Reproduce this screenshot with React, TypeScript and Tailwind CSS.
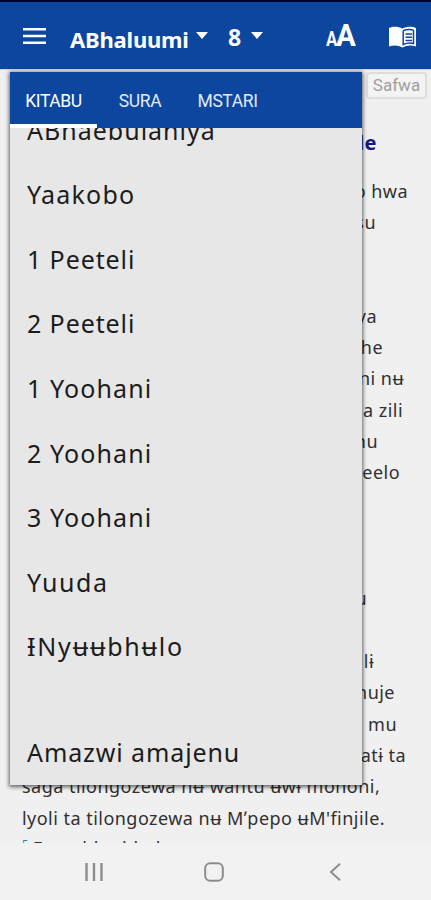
import React from 'react';

interface BookItem {
  name: string;
  className: string;
}

const books: BookItem[] = [
  { name: 'ABhaebulaniya', className: 'tracking-[1px]' },
  { name: 'Yaakobo', className: 'tracking-[1.2px]' },
  { name: '1 Peeteli', className: 'tracking-[0.9px]' },
  { name: '2 Peeteli', className: 'tracking-[0.9px]' },
  { name: '1 Yoohani', className: 'tracking-[1.1px]' },
  { name: '2 Yoohani', className: 'tracking-[1.1px]' },
  { name: '3 Yoohani', className: 'tracking-[1.1px]' },
  { name: 'Yuuda', className: 'tracking-[1.6px]' },
  { name: 'ƗNyʉʉbhʉlo', className: 'tracking-[1.8px]' },
];

// Chapter text; most of each line sits below the open book list
const verses = [
  { text: 'o hwa', className: 'mt-[18px] pr-[23px]' },
  { text: 'su', className: 'pr-[55px]' },
  { text: 'ya', className: 'mt-[62px] pr-[54px]' },
  { text: 'he', className: 'pr-[48px]' },
  { text: 'ni nʉ', className: 'pr-[27px]' },
  { text: 'a zili', className: 'pr-[28px]' },
  { text: 'nu', className: 'pr-[53px]' },
  { text: 'eelo', className: 'pr-[31px]' },
  { text: 'u', className: 'mt-[94px] pr-[64px]' },
  { text: 'lɨ', className: 'mt-[32px] pr-[57px]' },
  { text: 'nuje', className: 'pr-[36px]' },
  { text: 'mu', className: 'pr-[34px]' },
  { text: 'atɨ ta', className: 'pr-[25px]' },
];

const Header: React.FC = () => (
  <header className="flex h-[69px] shrink-0 items-center border-t-2 border-[#000035] bg-[#0d469f] text-white">
    <svg className="ml-[22px] h-[18px] w-6" viewBox="0 0 24 18" fill="none" stroke="currentColor" strokeWidth="2.6">
      <path d="M1 2.3h23M1 9h23M1 15.7h23" />
    </svg>
    <div className="ml-6 flex w-[119px] pt-1.5 text-[22px] leading-none font-bold">
      <span className="tracking-[-0.2px]">ABhaluumi</span>
    </div>
    <svg className="ml-[7px] h-[7px] w-3" viewBox="0 0 12 7" fill="currentColor">
      <path d="M0 0h12L6 7z" />
    </svg>
    <span className="ml-[20px] w-[15px] pt-1 text-[23px] leading-none font-bold">8</span>
    <svg className="ml-2 h-[7px] w-3" viewBox="0 0 12 7" fill="currentColor">
      <path d="M0 0h12L6 7z" />
    </svg>
    <div className="ml-[63px] flex w-[32px] items-baseline font-['Roboto',sans-serif] leading-none font-bold">
      <span className="w-[10px] origin-left scale-x-[0.8] text-[21px]">A</span>
      <span className="origin-left scale-x-[0.95] text-[31px]">A</span>
    </div>
    <svg className="mt-0.5 ml-[30px] h-[22px] w-[29px]" viewBox="0 0 29 22">
      <path fill="currentColor" d="M1 2C5 0 10.500.5 14.500 2.500C18.500.5 24 0 28 2V20.500C23.500 18.800 18.500 19 14.500 21.500C10.500 19 5.500 18.800 1 20.500z" />
      <path fill="none" stroke="#0d469f" strokeWidth="1.500" d="M15 4.800C18.500 3.500 22 3.200 25.500 4.200M15.200 5v13.500C18.500 17 22 16.600 25.500 17.400V4.200M17.500 8h6.500M17.500 11.200h6.500M17.500 14.400h6.500" />
    </svg>
  </header>
);

const BookSelector: React.FC = () => (
  <div className="absolute top-[72px] left-[10px] flex h-[713px] w-[352px] flex-col overflow-hidden bg-[#e7e7e7] shadow-[0_1px_4px_1px_rgba(0,0,0,0.6)]">
    <nav className="z-10 flex h-14 shrink-0 bg-[#0d469f] font-['Roboto',sans-serif] text-[17.5px] text-[#e3eafa]">
      <button className="flex w-[87px] items-center justify-center border-b-4 border-white pt-1.5 text-white">
        <span className="tracking-[-0.4px]">KITABU</span>
      </button>
      <button className="w-[86px] pt-0.5 tracking-[-0.4px]">SURA</button>
      <button className="w-[89px] pt-0.5 tracking-[-0.4px]">MSTARI</button>
    </nav>
    <div className="flex-1 overflow-hidden pl-[17px] text-[25px] text-[#1c1c1c]">
      <ul className="-mt-[30px]">
        {books.map((book) => (
          <li key={book.name} className="flex h-[64.6px] items-center">
            <span className={book.className}>{book.name}</span>
          </li>
        ))}
      </ul>
      <div className="mt-[40px] flex h-[66px] items-center tracking-[0.9px]">Amazwi amajenu</div>
    </div>
  </div>
);

const App: React.FC = () => (
  <div className="relative flex h-[900px] w-[431px] flex-col overflow-hidden bg-[#f0f0f0] font-['Noto_Sans','DejaVu_Sans',sans-serif]">
    <Header />
    <main className="h-[774px] shrink-0 overflow-hidden border-t border-[#c9d2e4] text-[18px] tracking-[0.47px] text-[#303030]">
      <div className="flex justify-end pt-0.5 pr-1">
        <span className="flex h-[27px] w-[61px] items-center justify-center rounded border-2 border-[#dddddd] bg-[#f3f3f3] font-['Roboto',sans-serif] text-[17px] tracking-normal text-[#a0a0a0]">
          Safwa
        </span>
      </div>
      <h2 className="mt-[28px] h-[31px] pr-[54px] text-right text-[20px] leading-[31px] font-bold text-[#17187c]">le</h2>
      {verses.map((verse, index) => (
        <p key={index} className={`box-content h-[31.35px] text-right leading-[31.35px] ${verse.className}`}>
          {verse.text}
        </p>
      ))}
      <p className="h-[31.35px] pl-[22px] leading-[31.35px] whitespace-nowrap">saga tilongozewa nʉ wantu ʉwɨ mononi,</p>
      <p className="h-[31.35px] pl-[22px] leading-[31.35px] whitespace-nowrap">lyoli ta tilongozewa nʉ Mʼpepo ʉM'finjile.</p>
      <p className="flex h-[31.35px] pl-[22px] leading-[29px] whitespace-nowrap">
        <span className="mr-1 text-[11px] leading-[20px] text-[#168b9c]">5</span>
        <span>Enne bhu bhahu</span>
      </p>
    </main>
    <footer className="flex h-[57px] shrink-0 items-center bg-[#f2f2f2] text-[#8d8d8d]">
      <svg className="ml-[84px] h-[18px] w-[20px]" viewBox="0 0 20 18" fill="none" stroke="currentColor" strokeWidth="2.4">
        <path d="M2.500 0v18M10 0v18M17.500 0v18" />
      </svg>
      <svg className="ml-[100px] h-5 w-5" viewBox="0 0 20 20" fill="none" stroke="currentColor" strokeWidth="2">
        <rect x="1.200" y="1.200" width="17.600" height="17.600" rx="5" />
      </svg>
      <svg className="ml-[105px] h-[18px] w-3" viewBox="0 0 12 18" fill="none" stroke="currentColor" strokeWidth="2">
        <path d="M11 .8L2 9l9 8.200" />
      </svg>
    </footer>
    <BookSelector />
  </div>
);

export default App;
